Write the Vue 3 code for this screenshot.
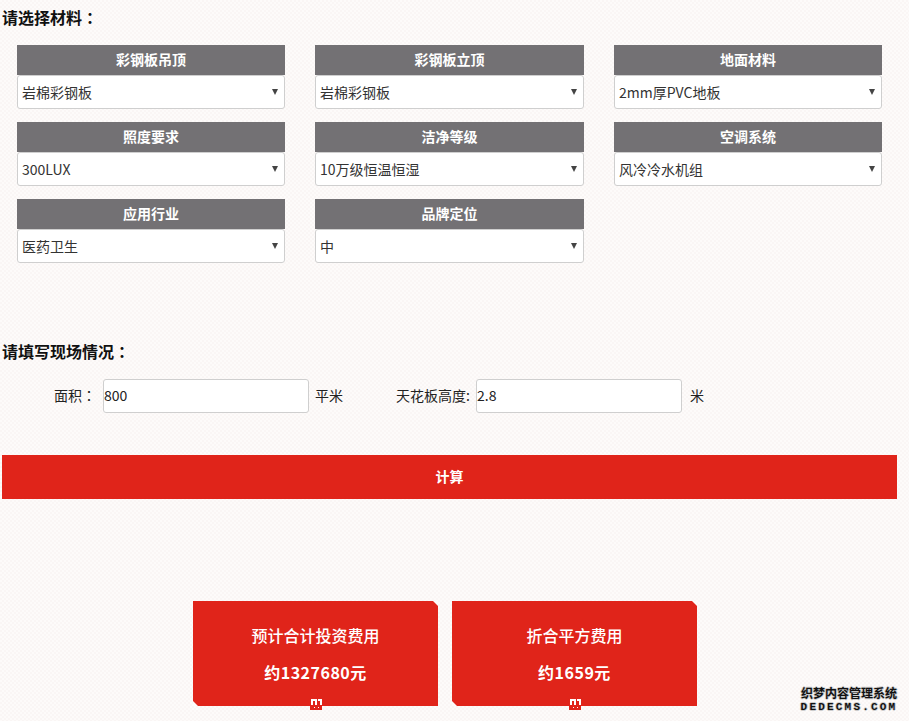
<script setup>
const materials = [
  { title: '彩钢板吊顶', value: '岩棉彩钢板' },
  { title: '彩钢板立顶', value: '岩棉彩钢板' },
  { title: '地面材料', value: '2mm厚PVC地板' },
  { title: '照度要求', value: '300LUX' },
  { title: '洁净等级', value: '10万级恒温恒湿' },
  { title: '空调系统', value: '风冷冷水机组' },
  { title: '应用行业', value: '医药卫生' },
  { title: '品牌定位', value: '中' },
]
const results = [
  { title: '预计合计投资费用', value: '约1327680元' },
  { title: '折合平方费用', value: '约1659元' },
]
</script>

<template>
  <main class="page">
    <h2 class="heading first">请选择材料<span class="colon">：</span></h2>
    <section class="grid">
      <div v-for="m in materials" :key="m.title" class="field">
        <div class="field-title">{{ m.title }}</div>
        <div class="select-wrap">
          <select class="select">
            <option>{{ m.value }}</option>
          </select>
        </div>
      </div>
    </section>

    <h2 class="heading second">请填写现场情况<span class="colon">：</span></h2>
    <section class="site">
      <label class="site-label area">面积<span class="colon">：</span></label>
      <input class="site-input" value="800" />
      <span class="unit unit-sq">平米</span>
      <label class="site-label height">天花板高度:</label>
      <input class="site-input" value="2.8" />
      <span class="unit unit-m">米</span>
    </section>

    <button class="calc"><span class="calc-text">计算</span></button>

    <section class="results">
      <div v-for="r in results" :key="r.title" class="result">
        <div class="result-title">{{ r.title }}</div>
        <div class="result-value">{{ r.value }}</div>
        <svg class="mark" width="12" height="11" viewBox="0 0 12 11">
          <rect y="5" width="12" height="6" fill="#e0241a" />
          <path fill-rule="evenodd" d="M1 0h6v6H5V2H3v4H1z" fill="#fff" />
          <path d="M8 0h4v6h-2V2H8z" fill="#fff" />
          <rect x="4" y="8" width="1" height="1" fill="#fff" />
          <rect x="8" y="8" width="1" height="1" fill="#fff" />
        </svg>
      </div>
    </section>

    <div class="watermark">
      <div class="wm-cn">织梦内容管理系统</div>
      <div class="wm-en">DEDECMS.COM</div>
    </div>
  </main>
</template>

<style>
html, body {
  margin: 0;
  background-color: #fdfbfa;
  background-image:
    linear-gradient(45deg, #faf6f5 25%, transparent 25%, transparent 75%, #faf6f5 75%),
    linear-gradient(45deg, #faf6f5 25%, transparent 25%, transparent 75%, #faf6f5 75%);
  background-size: 4px 4px;
  background-position: 0 0, 2px 2px;
}
</style>

<style scoped>
.page {
  position: relative;
  width: 909px;
  height: 721px;
  overflow: hidden;
  font-family: "Noto Sans CJK SC", "Noto Sans", sans-serif;
  color: #222;
}
.colon { font-family: "Noto Sans CJK TC", sans-serif; }
.heading {
  margin: 0;
  padding-left: 2px;
  font-size: 16px;
  line-height: 24px;
  font-weight: 700;
  color: #111;
}
.first { padding-top: 5px; }
.grid {
  display: grid;
  grid-template-columns: 268px 269px 268px;
  column-gap: 30px;
  row-gap: 13px;
  margin: 16px 0 0 17px;
}
.field-title {
  height: 30px;
  background: #737174;
  color: #fff;
  font-size: 14px;
  font-weight: 700;
  line-height: 28px;
  text-align: center;
}
.select-wrap {
  position: relative;
}
.select-wrap::after {
  content: "";
  position: absolute;
  right: 7px;
  top: 14px;
  border-left: 3px solid transparent;
  border-right: 3px solid transparent;
  border-top: 6px solid #444;
  pointer-events: none;
}
.select {
  display: block;
  box-sizing: border-box;
  width: 100%;
  height: 34px;
  padding: 0 4px 1px;
  appearance: none;
  background: #fff;
  border: 1px solid #cfcfcf;
  border-radius: 3px;
  font-family: inherit;
  font-size: 14px;
  color: #333;
}
.second { margin-top: 76px; }
.site {
  display: flex;
  align-items: center;
  height: 34px;
  margin-top: 16px;
  font-size: 14px;
  color: #222;
}
.site-label { white-space: nowrap; margin-bottom: 2px; }
.area { margin-left: 54px; width: 49px; }
.height { margin-left: 52px; width: 80px; }
.site-input {
  box-sizing: border-box;
  width: 206px;
  height: 34px;
  padding: 0 0 2px;
  background: #fff;
  border: 1px solid #cfcfcf;
  border-radius: 3px;
  font-family: inherit;
  font-size: 14px;
  color: #222;
}
.unit { margin-left: 7px; margin-bottom: 2px; width: 28px; white-space: nowrap; }
.unit-sq { margin-left: 6px; width: 29px; }
.unit-m { margin-left: 8px; }
.calc {
  display: block;
  width: 895px;
  height: 44px;
  margin: 42px 0 0 2px;
  padding: 0 0 2px;
  background: #e0241a;
  border: 0;
  color: #fff;
  font-family: inherit;
  font-size: 14px;
  font-weight: 700;
}
.results {
  display: flex;
  gap: 14px;
  margin: 102px 0 0 193px;
}
.result {
  position: relative;
  width: 245px;
  height: 105px;
  box-sizing: border-box;
  padding-top: 22px;
  background: #e0241a;
  color: #fff;
  text-align: center;
}
.result::before,
.result::after {
  content: "";
  position: absolute;
  width: 0;
  height: 0;
}
.result::before {
  top: 0;
  right: 0;
  border-top: 5px solid #fdfbfa;
  border-left: 5px solid transparent;
}
.result::after {
  left: 0;
  bottom: 0;
  border-bottom: 5px solid #fdfbfa;
  border-right: 5px solid transparent;
}
.result-title {
  font-size: 16px;
  line-height: 24px;
  font-weight: 500;
}
.result-value {
  margin-top: 13px;
  font-size: 16px;
  line-height: 24px;
  font-weight: 700;
  letter-spacing: 0.5px;
}
.mark {
  position: absolute;
  left: 117px;
  top: 98px;
  overflow: visible;
}
.watermark {
  position: absolute;
  left: 800px;
  top: 686px;
  width: 98px;
  color: #111;
  text-align: center;
  font-weight: 700;
  text-shadow: 1px 0 0 #ccc, -1px 0 0 #ccc, 0 1px 0 #ccc, 0 -1px 0 #ccc;
}
.wm-cn { font-size: 12px; line-height: 14px; white-space: nowrap; }
.wm-en { margin-top: 1px; font-size: 11px; line-height: 13px; letter-spacing: 2.2px; font-family: "Liberation Mono", monospace; white-space: nowrap; }
</style>
